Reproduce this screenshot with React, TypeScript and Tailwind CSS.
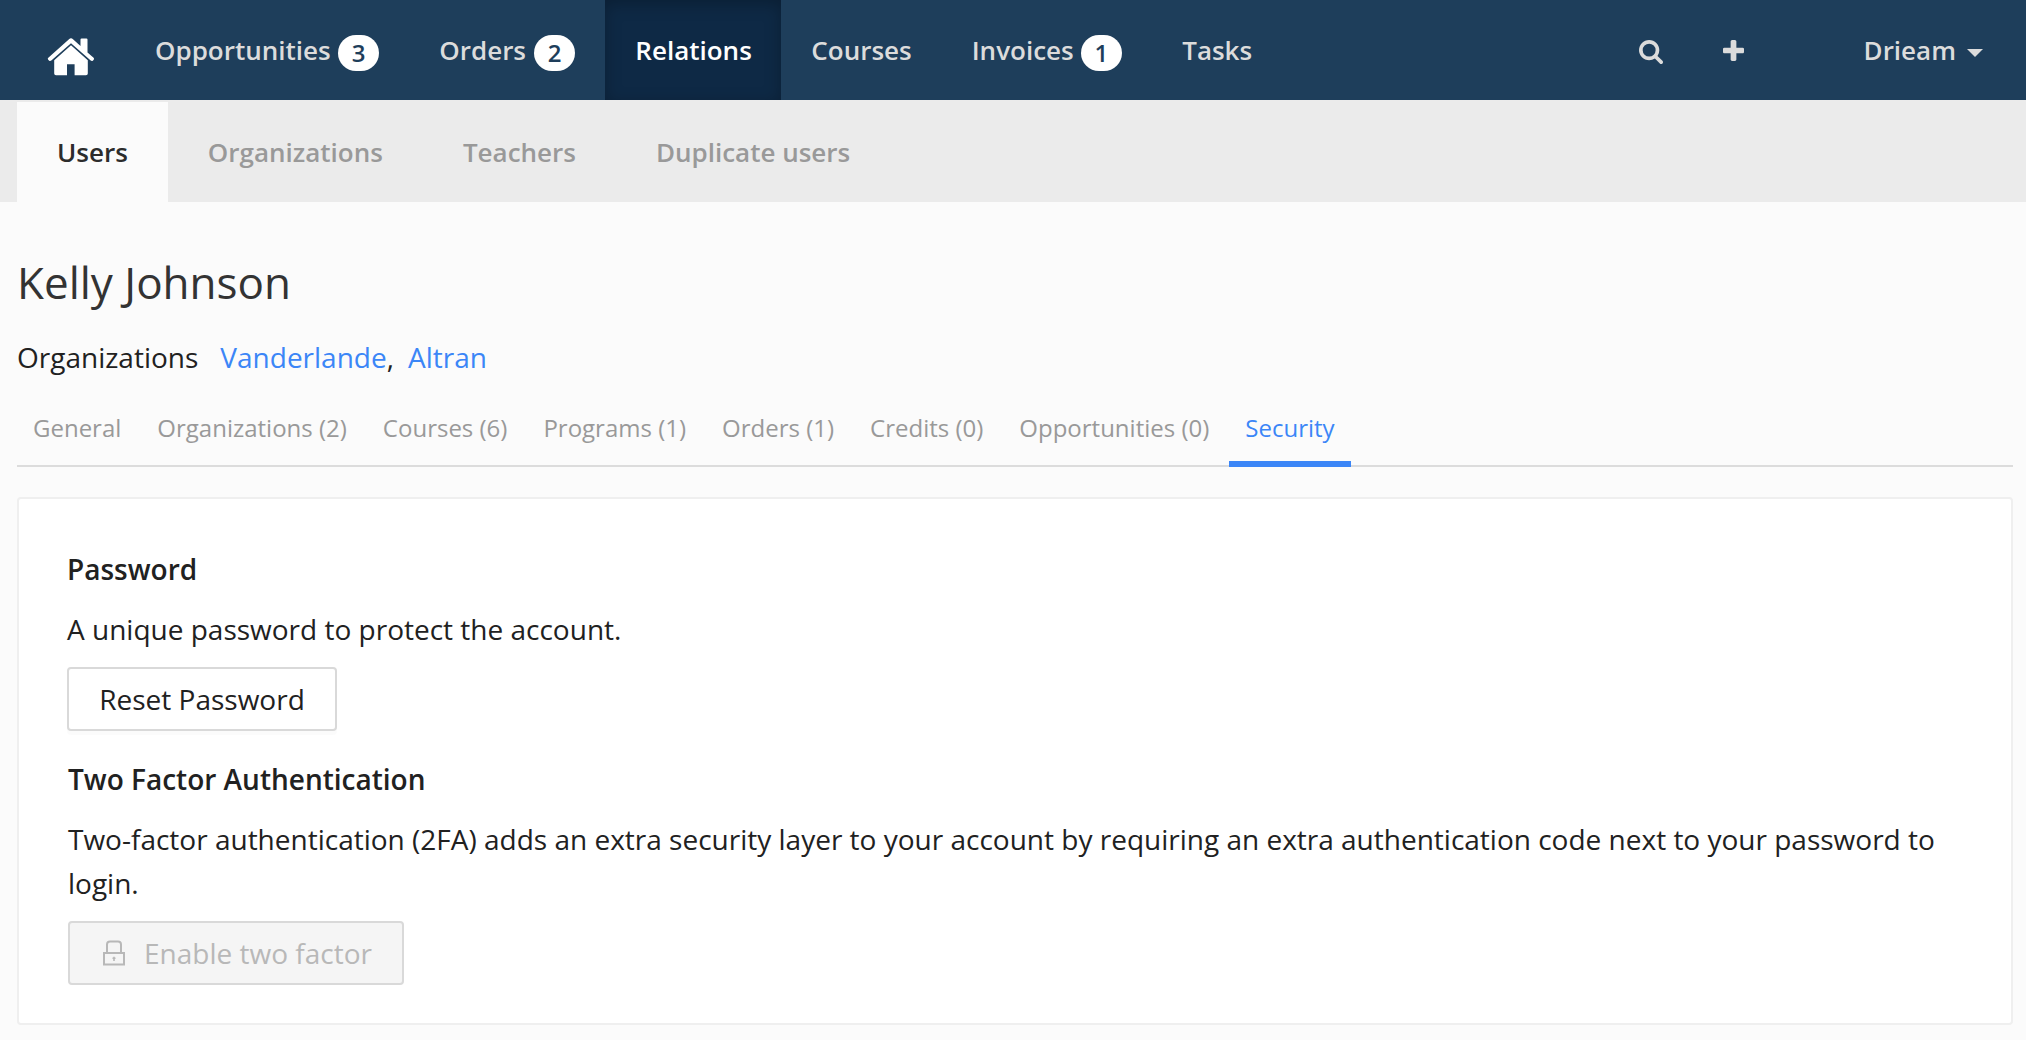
import React from "react";

const HomeIcon = () => (
  <svg width="48" height="38" viewBox="0 0 48 38" fill="#fff">
    <path d="M24 0.3 Q25 0.3 26 1.2 L33.5 8 V1.6 Q33.5 0.5 34.6 0.5 H39.4 Q40.5 0.5 40.5 1.6 V14.4 L46.6 19.8 Q47.6 20.8 46.7 21.8 L45.8 22.7 Q44.8 23.5 43.7 22.6 L24 5.3 L4.3 22.6 Q3.2 23.5 2.2 22.7 L1.2 21.8 Q0.2 20.8 1.3 19.8 L22 1.2 Q23 0.3 24 0.3 Z" />
    <path d="M24 7.3 L40.8 22.2 V35.5 Q40.8 37.3 39 37.3 H27.6 V26.3 H20 V37.3 H9 Q7.2 37.3 7.2 35.5 V22.2 Z" />
  </svg>
);

const SearchIcon = () => (
  <svg width="24" height="24" viewBox="0 128 1664 1664" fill="currentColor">
    <path d="M1152 832q0-185-131.5-316.5t-316.5-131.5-316.5 131.5-131.5 316.5 131.5 316.5 316.5 131.5 316.5-131.5 131.5-316.5zm512 832q0 52-38 90t-90 38q-54 0-90-38l-343-342q-179 124-399 124-143 0-273.5-55.5t-225-150-150-225-55.5-273.5 55.5-273.5 150-225 225-150 273.5-55.5 273.5 55.5 225 150 150 225 55.5 273.5q0 220-124 399l343 343q37 37 37 90z" />
  </svg>
);

const PlusIcon = () => (
  <svg width="21" height="21" viewBox="0 128 1408 1408" fill="currentColor">
    <path d="M1408 736v192q0 40-28 68t-68 28h-416v416q0 40-28 68t-68 28h-192q-40 0-68-28t-28-68v-416h-416q-40 0-68-28t-28-68v-192q0-40 28-68t68-28h416v-416q0-40 28-68t68-28h192q40 0 68 28t28 68v416h416q40 0 68 28t28 68z" />
  </svg>
);

const LockIcon = () => (
  <svg width="22" height="26" viewBox="0 0 22 26" fill="none" stroke="currentColor" strokeWidth="2">
    <path d="M1 13H21V24.5H1Z M4 13V4.5Q4 1.5 7 1.5H15Q18 1.5 18 4.5V13" />
    <path d="M9.5 18.2 H12.5 M11 16.8V21" strokeWidth="1.6" />
  </svg>
);

const navItems = [
  { label: "Opportunities", badge: "3", active: false, width: "w-[284.3px]" },
  { label: "Orders", badge: "2", active: false, width: "w-[196px]" },
  { label: "Relations", badge: "", active: true, width: "w-[176px]" },
  { label: "Courses", badge: "", active: false, width: "w-[160.4px]" },
  { label: "Invoices", badge: "1", active: false, width: "w-[210.5px]" },
  { label: "Tasks", badge: "", active: false, width: "w-[130px]" },
];

const sections = ["Users", "Organizations", "Teachers", "Duplicate users"];

const tabs = [
  "General",
  "Organizations (2)",
  "Courses (6)",
  "Programs (1)",
  "Orders (1)",
  "Credits (0)",
  "Opportunities (0)",
  "Security",
];

export default function App() {
  return (
    <div className="h-[1040px] w-[2026px] overflow-hidden bg-[#fbfbfb] font-['Open_Sans',sans-serif] text-[28px] leading-[44px] text-[#212121]">
      <header className="flex h-[100px] items-center bg-[#1e3e5b] text-[26px] font-semibold text-[#dcdcdc]">
        <a className="w-[125px] shrink-0 pt-[13px] pl-[47px]">
          <HomeIcon />
        </a>
        <nav className="flex h-full">
          {navItems.map((item) => (
            <a
              key={item.label}
              className={`flex h-full shrink-0 items-center justify-between px-[30px] ${item.width} ${
                item.active ? "bg-[#0e2945] text-white shadow-[inset_0_4px_16px_rgba(0,0,0,0.25)]" : ""
              }`}
            >
              {item.label}
              {item.badge && (
                <span className="mt-[6px] flex h-9 w-[41.6px] items-center justify-center rounded-[20px] bg-white text-[24px] text-[#1e3e5b]">
                  {item.badge}
                </span>
              )}
            </a>
          ))}
        </nav>
        <div className="ml-auto flex items-center pr-[43px]">
          <span className="mt-[3px] mr-[60px]"><SearchIcon /></span>
          <span className="mr-[120px]"><PlusIcon /></span>
          <span>Drieam</span>
          <span className="mt-[6px] ml-[11px] border-x-8 border-t-8 border-x-transparent border-t-[#dcdcdc]" />
        </div>
      </header>

      <nav className="flex h-[102px] bg-[#ebebeb] pt-0.5 pl-[17px] text-[26px] font-semibold text-[#999]">
        {sections.map((s, i) => (
          <a key={s} className={`flex items-center px-10 ${i === 0 ? "bg-[#fbfbfb] text-[#2c2c2c]" : ""}`}>
            {s}
          </a>
        ))}
      </nav>

      <main className="pr-[13px] pl-[17px]">
        <h1 className="mt-[50px] text-[44px] leading-[60px] text-[#333]">Kelly Johnson</h1>
        <div className="mt-[23px] flex">
          <span className="mr-[22px]">Organizations</span>
          <a className="text-[#3b86f7]">Vanderlande</a>
          <span className="mr-[14px]">,</span>
          <a className="text-[#3b86f7]">Altran</a>
        </div>

        <div className="flex gap-1 border-b-2 border-[#dcdcdc] pt-[31px] text-[24px] leading-9 text-[#999]">
          {tabs.map((t) => (
            <a
              key={t}
              className={`-mb-0.5 border-b-[6px] px-4 pb-[15px] ${
                t === "Security" ? "border-[#3b86f7] text-[#3b86f7]" : "border-transparent"
              }`}
            >
              {t}
            </a>
          ))}
        </div>

        <section className="mt-[30px] h-[528px] rounded-[4px] border-2 border-[#efefef] bg-white px-12 pt-12">
          <h2 className="font-semibold">Password</h2>
          <p className="mt-4">A unique password to protect the account.</p>
          <button className="mt-4 flex h-16 w-[270px] items-center justify-center rounded-[4px] border-2 border-[#d9d9d9] bg-white shadow-[0_4px_0_rgba(0,0,0,0.015)]">
            Reset Password
          </button>
          <div className="pl-px">
            <h2 className="mt-[26px] font-semibold">Two Factor Authentication</h2>
            <p className="mt-4">
              Two-factor authentication (2FA) adds an extra security layer to your account by requiring an extra
              authentication code next to your password to login.
            </p>
            <button className="mt-4 flex h-16 w-[336px] items-center gap-[19px] rounded-[4px] border-2 border-[#d9d9d9] bg-[#f5f5f5] pl-[33px] text-[#b8b8b8]">
              <LockIcon />
              Enable two factor
            </button>
          </div>
        </section>
      </main>
    </div>
  );
}
